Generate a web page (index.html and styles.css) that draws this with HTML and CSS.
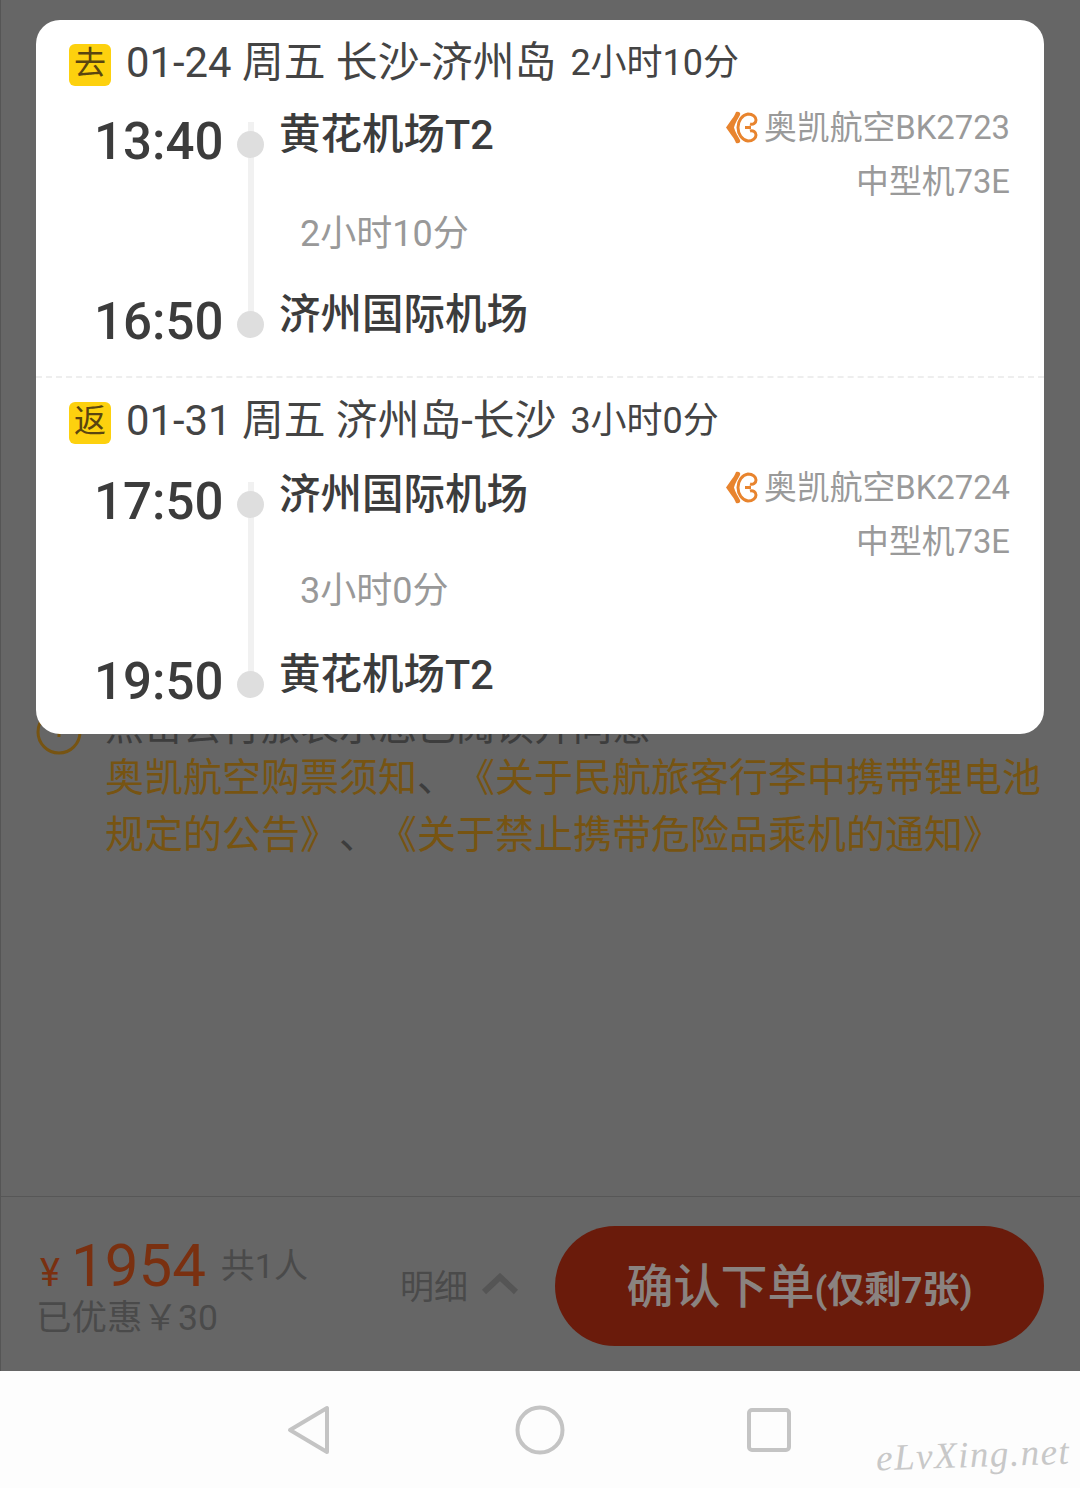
FILE: index.html
```html
<!DOCTYPE html>
<html lang="zh-CN">
<head>
  <meta charset="UTF-8">
  <meta name="viewport" content="width=device-width, initial-scale=1.0">
  <link rel="stylesheet" href="styles.css">
  <title>确认订单</title>
</head>
<body>
  <div class="page">
    <section class="content">
      <div class="terms">
        <svg class="terms-icon" width="46" height="46" viewBox="0 0 46 46"><circle cx="23" cy="23" r="21" fill="none" stroke="#775412" stroke-width="3"/><path d="M23 12v16" stroke="#775412" stroke-width="3"/></svg>
        <p class="terms-text"><span class="terms-lead">点击去行旅表示您已阅读并同意</span><span class="link">奥凯航空购票须知</span>、<span class="link">《关于民航旅客行李中携带锂电池</span><br><span class="link">规定的公告》</span>、<span class="link">《关于禁止携带危险品乘机的通知》</span></p>
      </div>
    </section>

    <footer class="footer">
      <div class="price">
        <div class="price-top">
          <span class="yen">¥</span><span class="amount">1954</span><span class="people">共1人</span>
        </div>
        <div class="discount">已优惠￥30</div>
      </div>
      <div class="detail">
        <span>明细</span>
        <svg width="36" height="22" viewBox="0 0 36 22"><path d="M2 19L18 4l16 15" fill="none" stroke="#555" stroke-width="6"/></svg>
      </div>
      <button class="submit" type="button">确认下单<small>(仅剩7张)</small></button>
    </footer>

    <div class="popup">
      <div class="leg">
        <div class="leg-head">
          <span class="badge">去</span>
          <span class="leg-title">01-24 周五 长沙-济州岛</span>
          <span class="leg-total">2小时10分</span>
        </div>
        <div class="route">
          <div class="time">13:40</div>
          <div class="track"><i class="dot"></i><i class="dot"></i></div>
          <div class="airport">黄花机场T2</div>
          <div class="flight">
            <div class="carrier">
              <svg class="logo" width="32" height="34" viewBox="0 0 32 34"><path d="M10 1c3-1 5 1 4 3-2 4-5 8-6 12.500 1 4.500 4 8.500 6 12.500 1 2-1 4-4 3-1-2-2-5-4-7l-6-8.500 6-8.500c2-2 3-5 4-7z" fill="#e8842e"/><path d="M24 13c3 1 6-1 6-4s-3-6-8-6c-6 1-10 7-10 13.500S16 29 22 30c5 0 8-3 8-6s-3-5-6-4M19 16.500h6" fill="none" stroke="#e8842e" stroke-width="3"/></svg>
              奥凯航空BK2723
            </div>
            <div>中型机73E</div>
          </div>
          <div class="duration">2小时10分</div>
          <div class="time time-end">16:50</div>
          <div class="airport airport-end">济州国际机场</div>
        </div>
      </div>

      <div class="leg">
        <div class="leg-head">
          <span class="badge">返</span>
          <span class="leg-title">01-31 周五 济州岛-长沙</span>
          <span class="leg-total">3小时0分</span>
        </div>
        <div class="route">
          <div class="time">17:50</div>
          <div class="track"><i class="dot"></i><i class="dot"></i></div>
          <div class="airport">济州国际机场</div>
          <div class="flight">
            <div class="carrier">
              <svg class="logo" width="32" height="34" viewBox="0 0 32 34"><path d="M10 1c3-1 5 1 4 3-2 4-5 8-6 12.500 1 4.500 4 8.500 6 12.500 1 2-1 4-4 3-1-2-2-5-4-7l-6-8.500 6-8.500c2-2 3-5 4-7z" fill="#e8842e"/><path d="M24 13c3 1 6-1 6-4s-3-6-8-6c-6 1-10 7-10 13.500S16 29 22 30c5 0 8-3 8-6s-3-5-6-4M19 16.500h6" fill="none" stroke="#e8842e" stroke-width="3"/></svg>
              奥凯航空BK2724
            </div>
            <div>中型机73E</div>
          </div>
          <div class="duration">3小时0分</div>
          <div class="time time-end">19:50</div>
          <div class="airport airport-end">黄花机场T2</div>
        </div>
      </div>
    </div>
  </div>

  <nav class="navbar">
    <svg width="44" height="50" viewBox="0 0 44 50"><path d="M40 3v44L3 25z" fill="none" stroke="#c4c4c4" stroke-width="4" stroke-linejoin="round"/></svg>
    <svg class="nav-home" width="50" height="50" viewBox="0 0 50 50"><circle cx="25" cy="25" r="22.500" fill="none" stroke="#c4c4c4" stroke-width="4"/></svg>
    <svg width="46" height="46" viewBox="0 0 46 46"><rect x="3" y="3" width="40" height="40" rx="3" fill="none" stroke="#c4c4c4" stroke-width="4"/></svg>
    <span class="watermark">eLvXing.net</span>
  </nav>
</body>
</html>
```

FILE: styles.css
```css
* {
  box-sizing: border-box;
}

body {
  margin: 0;
  height: 1488px;
  overflow: hidden;
  background-color: #fdfdfd;
  font-family: Roboto, "Noto Sans CJK SC", sans-serif;
}

.page {
  position: relative;
  height: 1371px;
  background-color: #666;
  border-left: 1px solid #555;
}

.content {
  height: 1196px;
  padding: 704px 0 0 35px;
}

.terms {
  display: flex;
  gap: 23px;
}

.terms-icon {
  flex: none;
  margin-top: 5px;
}

.terms-text {
  margin: 0;
  font-size: 39px;
  line-height: 57px;
  color: #3d3d3d;
  white-space: nowrap;
  text-spacing-trim: space-all;
}

.terms-lead {
  display: block;
  line-height: 46px;
}

.link {
  color: #775412;
}

.footer {
  display: flex;
  align-items: center;
  height: 175px;
  padding: 4px 36px 0 35px;
  border-top: 1px solid #575757;
}

.price {
  width: 364px;
}

.price-top {
  display: flex;
  align-items: baseline;
  height: 64px;
  color: #7a3010;
}

.yen {
  margin: 0 11px 0 4px;
  font-size: 38px;
}

.amount {
  font-size: 60px;
  line-height: 64px;
}

.people {
  position: relative;
  top: -8px;
  margin-left: 15px;
  font-size: 34px;
  color: #4a4a4a;
}

.discount {
  font-size: 35.5px;
  line-height: 40px;
  color: #4a4a4a;
}

.detail {
  display: flex;
  align-items: center;
  gap: 14px;
  width: 155px;
  margin-top: -4px;
  font-size: 34px;
  color: #4a4a4a;
}

.submit {
  flex: 1;
  height: 120px;
  padding: 0 0 8px;
  border: none;
  border-radius: 60px;
  background-color: #6a1b0b;
  color: #8a8380;
  font-family: inherit;
  font-size: 47px;
  font-weight: 500;
}

.submit small {
  font-size: 37px;
  font-weight: 700;
}

.popup {
  position: absolute;
  top: 20px;
  left: 35px;
  width: 1008px;
  height: 714px;
  overflow: hidden;
  border-radius: 24px;
  background-color: #fff;
}

.leg {
  height: 356px;
  padding-top: 24px;
}

.leg + .leg {
  height: 358px;
  border-top: 2px dashed #eee;
}

.leg-head {
  display: flex;
  align-items: flex-start;
  height: 42px;
  padding-left: 33px;
  line-height: 38px;
  color: #444;
}

.badge {
  width: 42px;
  height: 42px;
  margin-right: 15px;
  border-radius: 6px;
  background-color: #fdd10e;
  text-align: center;
  font-size: 32px;
  line-height: 38px;
  color: #5a4510;
}

.leg-title {
  font-size: 41.8px;
}

.leg-total {
  margin-left: 14px;
  font-size: 36px;
}

.route {
  display: grid;
  grid-template-columns: 143px 27px 1fr auto;
  grid-template-rows: 64px 116px 64px;
  margin-top: 22px;
  padding: 0 34px 0 58px;
}

.leg + .leg .route {
  margin-top: 24px;
}

.time {
  grid-column: 1;
  font-size: 51px;
  font-weight: 500;
  line-height: 68px;
  color: #3c3c3c;
}

.time-end {
  grid-row: 3;
}

.track {
  position: relative;
  grid-column: 2;
  grid-row: 1 / 4;
}

.track::before {
  content: "";
  position: absolute;
  top: 14px;
  bottom: 28px;
  left: 11px;
  width: 6px;
  background-color: #f1f1f1;
}

.dot {
  position: absolute;
  left: 0;
  top: 23px;
  width: 27px;
  height: 27px;
  border-radius: 50%;
  background-color: #dedede;
}

.dot + .dot {
  top: 203px;
}

.airport {
  grid-column: 3;
  padding-left: 15px;
  font-size: 41.5px;
  font-weight: 500;
  line-height: 54px;
  color: #3c3c3c;
}

.airport-end {
  grid-row: 3;
}

.flight {
  grid-column: 4;
  grid-row: 1 / 3;
  margin-top: -7px;
  font-size: 32.8px;
  line-height: 54px;
  text-align: right;
  color: #9a9a9a;
}

.carrier {
  display: flex;
  align-items: center;
  gap: 6px;
}

.logo {
  flex: none;
}

.duration {
  grid-column: 3;
  grid-row: 2;
  align-self: center;
  padding-left: 36px;
  font-size: 36px;
  color: #999;
}

.leg + .leg .duration {
  margin-top: -6px;
}

.navbar {
  position: relative;
  display: flex;
  justify-content: center;
  align-items: center;
  height: 117px;
  padding-right: 2px;
}

.nav-home {
  margin: 0 181px 0 184px;
}

.watermark {
  position: absolute;
  right: 10px;
  bottom: 12px;
  font-family: "Liberation Serif", serif;
  font-style: italic;
  font-size: 37px;
  letter-spacing: 1.500px;
  color: #c8c8c8;
  transform: rotate(-2deg);
}
```
